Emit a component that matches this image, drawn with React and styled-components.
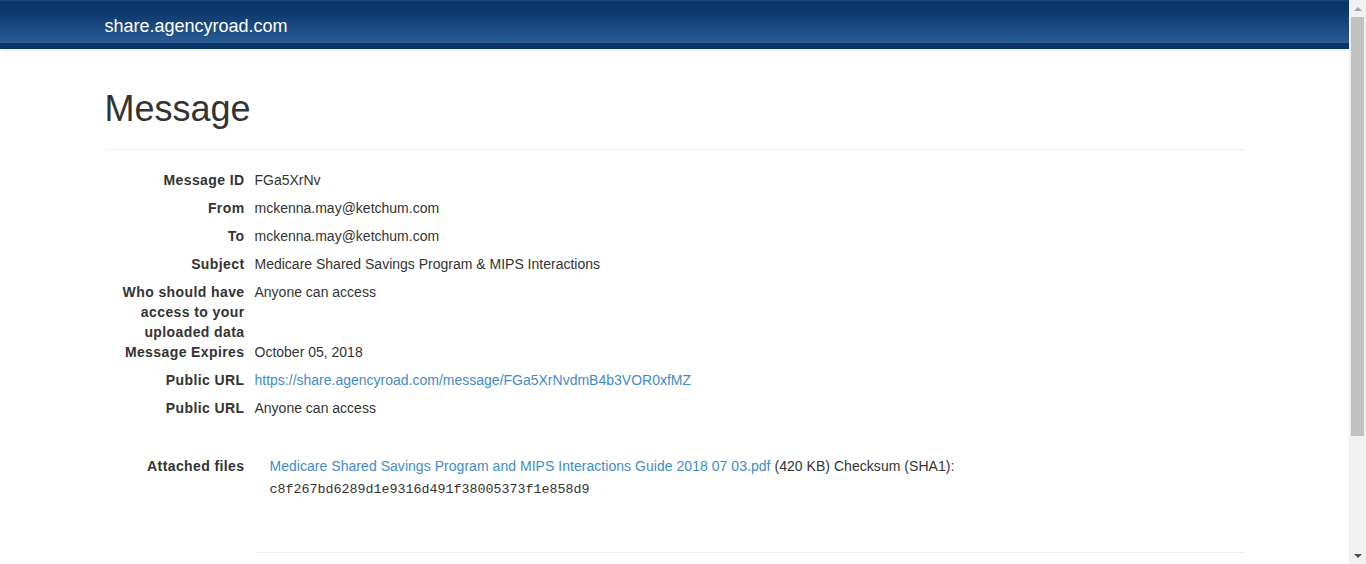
import React from "react";
import styled, { createGlobalStyle } from "styled-components";

const GlobalStyle = createGlobalStyle`
  html, body {
    margin: 0;
    padding: 0;
    height: 100%;
    overflow: hidden;
    background: #fff;
  }
  body {
    font-family: "Liberation Sans", Arial, sans-serif;
    font-size: 14px;
    line-height: 20px;
    color: #333;
  }
`;

const fields = [
  { label: "Message ID", value: "FGa5XrNv" },
  { label: "From", value: "mckenna.may@ketchum.com" },
  { label: "To", value: "mckenna.may@ketchum.com" },
  { label: "Subject", value: "Medicare Shared Savings Program & MIPS Interactions" },
  { label: "Who should have access to your uploaded data", value: "Anyone can access", tall: true },
  { label: "Message Expires", value: "October 05, 2018" },
  {
    label: "Public URL",
    value: "https://share.agencyroad.com/message/FGa5XrNvdmB4b3VOR0xfMZ",
    link: true,
  },
  { label: "Public URL", value: "Anyone can access" },
];

const App = () => {
  return (
    <Page>
      <GlobalStyle />
      <Main>
        <Navbar>
          <Container>
            <Brand href="#">share.agencyroad.com</Brand>
          </Container>
        </Navbar>
        <Container>
          <PageHeader>
            <Title>Message</Title>
          </PageHeader>
          <Details>
            {fields.map((f, i) => (
              <Row key={i} $tall={f.tall}>
                <Label>{f.label}</Label>
                <Value>{f.link ? <Link href="#">{f.value}</Link> : f.value}</Value>
              </Row>
            ))}
            <Row $spaced>
              <Label>Attached files</Label>
              <Files>
                <div>
                  <Link href="#">
                    Medicare Shared Savings Program and MIPS Interactions Guide 2018 07 03.pdf
                  </Link>{" "}
                  (420 KB) Checksum (SHA1):
                </div>
                <Checksum>c8f267bd6289d1e9316d491f38005373f1e858d9</Checksum>
              </Files>
            </Row>
          </Details>
          <Divider />
        </Container>
      </Main>
      <Scrollbar>
        <Arrow $up />
        <Track>
          <Thumb />
        </Track>
        <Arrow />
      </Scrollbar>
    </Page>
  );
};

export default App;

const Page = styled.div`
  display: flex;
  height: 100vh;
`;

const Main = styled.div`
  flex: 1;
  min-width: 0;
  overflow: hidden;
`;

const Navbar = styled.div`
  height: 49px;
  background: linear-gradient(
    to bottom,
    #1c487a 0,
    #0a3365 2px,
    #0c386c 12px,
    #2a5d94 43px,
    #0b3467 43px,
    #0b3467 49px
  );
  box-shadow: 0 1px 4px rgba(0, 0, 0, 0.12);
`;

const Container = styled.div`
  width: 1140px;
  margin: 0 auto;
`;

const Brand = styled.a`
  display: block;
  padding: 16px 0 13px;
  font-size: 18px;
  line-height: 20px;
  color: #fff;
  text-decoration: none;
`;

const PageHeader = styled.div`
  margin-top: 40px;
  padding-bottom: 20px;
  border-bottom: 1px solid #eee;
`;

const Title = styled.h1`
  margin: 0;
  font-size: 36px;
  font-weight: 500;
  line-height: 1.1;
  color: #333;
`;

const Details = styled.div`
  display: flex;
  flex-direction: column;
  margin-top: 20px;
`;

const Row = styled.div`
  display: grid;
  grid-template-columns: 140px 1fr;
  column-gap: 10px;
  margin-bottom: ${(p) => (p.$tall ? "0" : "8px")};
  margin-top: ${(p) => (p.$spaced ? "30px" : "0")};
`;

const Label = styled.div`
  font-weight: bold;
  letter-spacing: 0.4px;
  text-align: right;
  color: #333;
`;

const Value = styled.div`
  color: #333;
`;

const Link = styled.a`
  color: #428bca;
  text-decoration: none;
`;

const Files = styled.div`
  padding-left: 15px;
  letter-spacing: 0.04px;
`;

const Checksum = styled.div`
  margin-top: 4px;
  font-family: "Liberation Mono", "Courier New", monospace;
  font-size: 13.33px;
  letter-spacing: 0;
  color: #333;
`;

const Divider = styled.div`
  margin: 44px 0 0 150px;
  border-top: 1px solid #eee;
`;

const Scrollbar = styled.div`
  width: 17px;
  flex: none;
  display: flex;
  flex-direction: column;
  background: #f1f1f1;
`;

const Arrow = styled.div`
  height: 17px;
  display: flex;
  align-items: center;
  justify-content: center;
  &::before {
    content: "";
    border-left: 4px solid transparent;
    border-right: 4px solid transparent;
    ${(p) =>
      p.$up
        ? "border-bottom: 4px solid #a3a3a3;"
        : "border-top: 4px solid #505050;"}
  }
`;

const Track = styled.div`
  flex: 1;
  padding: 0 2px;
`;

const Thumb = styled.div`
  height: 419px;
  background: #c1c1c1;
`;
